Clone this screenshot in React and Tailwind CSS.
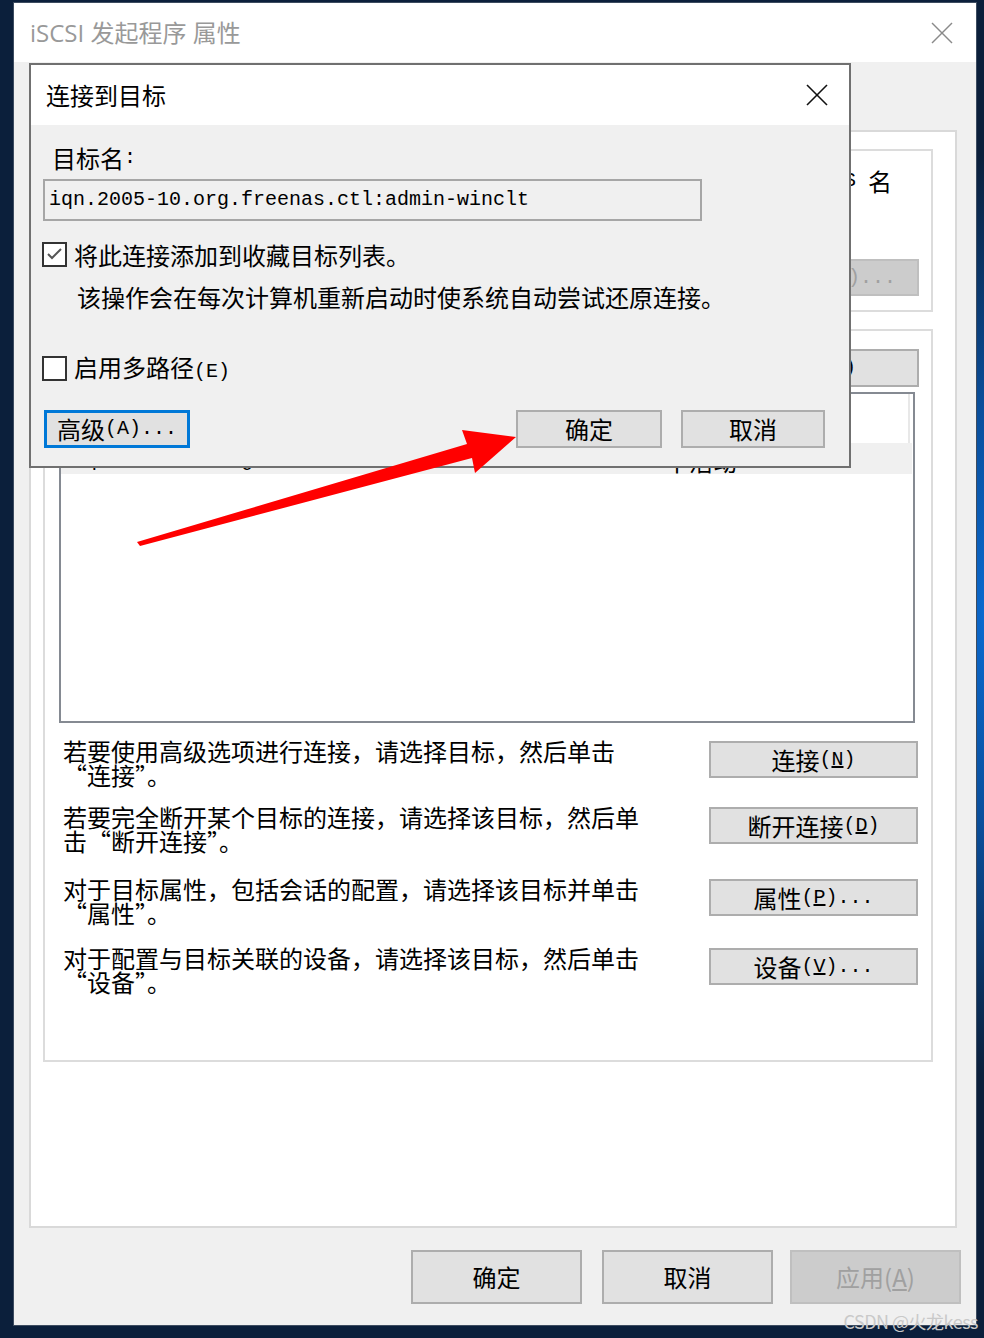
import React from 'react';

// half-width (SimSun style) latin inside CJK labels
function Half({ children }) {
  return <span className="font-['Liberation_Mono',monospace] text-[20px] leading-none">{children}</span>;
}

function Btn({ children, className = '', disabled = false }) {
  return (
    <div
      className={`flex items-center justify-center border-2 ${
        disabled ? 'border-[#bfbfbf] bg-[#cccccc] text-[#a0a0a0]' : 'border-[#adadad] bg-[#e1e1e1] text-black'
      } ${className}`}
    >
      {children}
    </div>
  );
}

function CloseX({ size = 22, color = '#000', width = 1.6 }) {
  return (
    <svg width={size} height={size} viewBox="0 0 22 22">
      <line x1="1" y1="1" x2="21" y2="21" stroke={color} strokeWidth={width} />
      <line x1="21" y1="1" x2="1" y2="21" stroke={color} strokeWidth={width} />
    </svg>
  );
}

const ACTIONS = [
  { mt: 'mt-[16px]', lines: ['若要使用高级选项进行连接，请选择目标，然后单击', '“连接”。'], label: <>连接<Half>(<u>N</u>)</Half></> },
  { mt: 'mt-[18px]', lines: ['若要完全断开某个目标的连接，请选择该目标，然后单', '击“断开连接”。'], label: <>断开连接<Half>(<u>D</u>)</Half></> },
  { mt: 'mt-[24px]', lines: ['对于目标属性，包括会话的配置，请选择该目标并单击', '“属性”。'], label: <>属性<Half>(<u>P</u>)...</Half></> },
  { mt: 'mt-[21px]', lines: ['对于配置与目标关联的设备，请选择该目标，然后单击', '“设备”。'], label: <>设备<Half>(<u>V</u>)...</Half></> },
];

export default function App() {
  return (
    <div className="relative w-[984px] h-[1338px] overflow-hidden bg-[#0b1f3b] bg-[radial-gradient(ellipse_70px_460px_at_100%_46%,#0b6ad0_0%,#0a4f9c_45%,#0b1f3b_100%)] pl-[13px] pt-[2px] font-['Noto_Sans_CJK_SC',sans-serif]">
      {/* ── Main property window ── */}
      <div className="w-[964px] h-[1324px] border border-[#3d4c60] bg-[#f0f0f0] flex flex-col">
        {/* title bar */}
        <div className="h-[59px] bg-white flex items-center justify-between pl-[16px] pr-[23px]">
          <span className="text-[24px] leading-none text-[#999999] font-['Open_Sans','Noto_Sans_CJK_SC',sans-serif]">
            iSCSI 发起程序 属性
          </span>
          <CloseX size={22} color="#8a8a8a" width={1.4} />
        </div>

        <div className="flex-1 flex flex-col pl-[15px] pr-[15px]">
          {/* tab page */}
          <div className="mt-[68px] w-[928px] h-[1098px] border-2 border-[#d9d9d9] bg-white px-[12px] pt-[17px] flex flex-col">
            {/* quick connect group */}
            <div className="w-[890px] h-[163px] border-2 border-[#dcdcdc] flex flex-col pr-[12px]">
              <div className="mt-[18px] h-[24px] pr-[27px] flex items-center justify-end text-[24px] leading-[24px] text-black whitespace-nowrap">
                请键入该目标的 IP 地址或 <Half>DNS</Half>
                <span className="ml-[12px]">名</span>
              </div>
              <div className="mt-[66px] flex justify-end">
                <Btn disabled className="w-[226px] h-[37px] pl-[12px] text-[24px] leading-none">
                  快速连接<Half>(Q)...</Half>
                </Btn>
              </div>
            </div>

            {/* discovered targets group */}
            <div className="mt-[17px] w-[890px] h-[733px] border-2 border-[#dcdcdc] flex flex-col">
              <div className="mt-[18px] pr-[12px] flex justify-end">
                <Btn className="w-[210px] h-[38px] text-[24px] leading-none">
                  刷新<Half>(<u>R</u>)</Half>
                </Btn>
              </div>

              <div className="mt-[5px] ml-[14px] w-[856px] h-[331px] border-2 border-[#858a92] bg-white flex flex-col">
                <div className="h-[49px] flex">
                  <div className="flex-1" />
                  <div className="w-[2px] mr-[3px] bg-[#e8e8e8]" />
                </div>
                <div className="h-[31px] mr-[1px] bg-[#f0f0f0] flex items-center pl-[12px] text-black">
                  <span className="w-[592px] font-['Liberation_Mono',monospace] text-[20px] leading-[31px] pt-[4px]">
                    iqn.2005-10.org.freenas.ctl:admin-winclt
                  </span>
                  <span className="text-[24px] leading-[31px] pt-[4px]">不活动</span>
                </div>
              </div>

              {ACTIONS.map((a, i) => (
                <div key={i} className={`${a.mt} flex items-start`}>
                  <div className="ml-[18px] w-[600px] text-[24px] leading-[24px] text-black whitespace-nowrap [font-feature-settings:'fwid']">
                    {a.lines.map((l, j) => (
                      <div key={j} className="h-[24px]">{l}</div>
                    ))}
                  </div>
                  <Btn className="ml-auto mr-[13px] mt-[2px] w-[209px] h-[37px] text-[24px] leading-none">
                    {a.label}
                  </Btn>
                </div>
              ))}
            </div>
          </div>

          {/* dialog buttons */}
          <div className="mt-[22px] flex justify-end">
            <Btn className="w-[171px] h-[54px] text-[24px]">确定</Btn>
            <Btn className="ml-[20px] w-[171px] h-[54px] text-[24px]">取消</Btn>
            <Btn disabled className="ml-[17px] w-[171px] h-[54px] text-[24px] bg-[#c8c8c8]">
              应用(<u>A</u>)
            </Btn>
          </div>
        </div>
      </div>

      {/* ── Connect to target dialog (modal) ── */}
      <div className="absolute left-[29px] top-[63px] w-[822px] h-[405px] border-2 border-[#707070] flex flex-col">
        <div className="h-[60px] bg-white flex items-center justify-between pl-[15px] pr-[21px]">
          <span className="text-[24px] leading-none text-black">连接到目标</span>
          <CloseX size={22} color="#111" width={1.6} />
        </div>
        <div className="flex-1 bg-[#f0f0f0] flex flex-col text-black text-[24px] leading-[24px]">
          <div className="mt-[21px] ml-[21px] h-[24px] flex items-center">目标名<Half>:</Half></div>
          <div className="mt-[9px] ml-[12px] w-[659px] h-[42px] border-2 border-[#a6a6a6] flex items-center pl-[4px]">
            <span className="font-['Liberation_Mono',monospace] text-[20px] leading-none">
              iqn.2005-10.org.freenas.ctl:admin-winclt
            </span>
          </div>

          <div className="mt-[21px] ml-[11px] h-[25px] flex items-center gap-[7px]">
            <div className="w-[25px] h-[25px] border-2 border-[#333333] bg-white flex items-center justify-center">
              <svg width="19" height="19" viewBox="0 0 19 19">
                <polyline points="3,9 7,13 16,4" fill="none" stroke="#555555" strokeWidth="2" />
              </svg>
            </div>
            <span>将此连接添加到收藏目标列表。</span>
          </div>
          <div className="mt-[18px] ml-[46px] h-[24px]">该操作会在每次计算机重新启动时使系统自动尝试还原连接。</div>

          <div className="mt-[47px] ml-[11px] h-[25px] flex items-center gap-[7px]">
            <div className="w-[25px] h-[25px] border-2 border-[#333333] bg-white" />
            <span>启用多路径<Half>(E)</Half></span>
          </div>

          <div className="mt-[29px] ml-[13px] mr-[24px] flex items-center">
            <Btn className="w-[146px] h-[38px] !border-[3px] !border-[#0078d7]">
              高级<Half>(A)...</Half>
            </Btn>
            <Btn className="ml-auto w-[146px] h-[38px]">确定</Btn>
            <Btn className="ml-[19px] w-[144px] h-[38px]">取消</Btn>
          </div>
        </div>
      </div>

      {/* ── Red annotation arrow ── */}
      <svg className="absolute left-0 top-0 pointer-events-none" width="984" height="1338">
        <polygon
          points="137,542 467,444 462,430 516,437 475,473 472,458 140,546"
          fill="#ff0000"
        />
      </svg>

      {/* watermark */}
      <div className="absolute right-[6px] bottom-[8px] text-[18px] leading-none text-[#c9c9c9] tracking-[-0.5px]">
        CSDN @火龙kess
      </div>
    </div>
  );
}
